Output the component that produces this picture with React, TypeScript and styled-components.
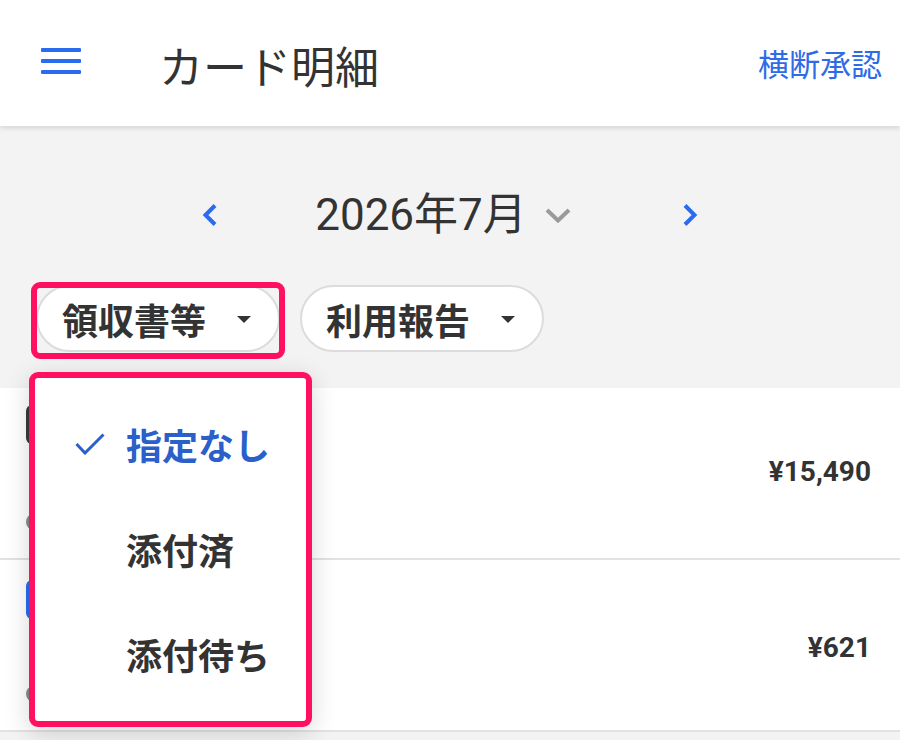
import React from "react";
import styled, { createGlobalStyle } from "styled-components";

const GlobalStyle = createGlobalStyle`
  html, body { margin: 0; padding: 0; background: #f4f3f4; }
  body { font-family: Roboto, "Noto Sans CJK JP", sans-serif; color: #333; }
  * { box-sizing: border-box; }
`;

const Page = styled.div`
  position: relative;
  width: 900px;
  height: 740px;
  overflow: hidden;
  background: #f4f3f4;
`;

const Header = styled.header`
  position: relative;
  z-index: 2;
  height: 126px;
  display: flex;
  align-items: center;
  padding: 0 18px 0 41px;
  background: #fff;
  box-shadow: 0 2px 5px rgba(0, 0, 0, 0.13);
`;

const MenuButton = styled.button`
  width: 40px;
  height: 26px;
  padding: 0;
  border: none;
  background: none;
  display: flex;
  margin-right: 78px;
  margin-top: -4px;
`;

const Title = styled.h1`
  margin: 4px 0 0;
  font-family: "Noto Sans CJK JP", sans-serif;
  font-size: 44px;
  font-weight: 400;
  line-height: 1;
  color: #333;
`;

const HeaderLink = styled.a`
  margin-left: auto;
  font-family: "Noto Sans CJK JP", sans-serif;
  font-size: 31px;
  color: #2f6be6;
  text-decoration: none;
  margin-top: -2px;
`;

const FilterArea = styled.section`
  padding: 59px 0 36px;
`;

const MonthNav = styled.div`
  display: flex;
  justify-content: center;
  align-items: center;
  height: 60px;
`;

const NavButton = styled.button`
  width: 48px;
  height: 48px;
  padding: 0;
  border: none;
  background: none;
  display: flex;
  align-items: center;
  justify-content: center;
`;

const MonthLabel = styled.div`
  display: flex;
  align-items: center;
  gap: 18px;
  margin: 0 95px 0 81px;
  font-size: 44px;
  font-weight: 400;
  color: #333;
  line-height: 1;
`;

const ChipRow = styled.div`
  display: flex;
  gap: 20px;
  padding-left: 36px;
  margin-top: 40px;
`;

const Chip = styled.button<{ $highlight?: boolean }>`
  position: relative;
  height: 67px;
  display: flex;
  align-items: center;
  gap: 31px;
  padding: 0 27px 0 24px;
  background: #fff;
  border: 2px solid #dcdcdc;
  border-radius: 34px;
  font-family: "Noto Sans CJK JP", sans-serif;
  font-size: 36px;
  font-weight: 700;
  color: #333;
  line-height: 1;
  &::after {
    content: "";
    display: ${(p) => (p.$highlight ? "block" : "none")};
    position: absolute;
    top: -5px;
    left: -7px;
    right: -7px;
    bottom: -9px;
    border: 6px solid #ff1060;
    border-radius: 9px;
  }
`;

const Caret = styled.span`
  width: 0;
  height: 0;
  border-left: 7px solid transparent;
  border-right: 7px solid transparent;
  border-top: 7px solid #333;
  margin-top: 2px;
`;

const List = styled.ul`
  margin: 0;
  padding: 0;
  list-style: none;
  background: #fff;
`;

const Row = styled.li`
  height: 172px;
  display: flex;
  align-items: center;
  justify-content: space-between;
  padding: 0 29px 0 26px;
  border-bottom: 2px solid #e2e2e2;
`;

const RowLead = styled.div<{ $top: number }>`
  align-self: stretch;
  display: flex;
  flex-direction: column;
  justify-content: space-between;
  padding: ${(p) => p.$top}px 0 28px;
`;

const Badge = styled.span<{ $color: string }>`
  width: 40px;
  height: 39px;
  border-radius: 6px;
  background: ${(p) => p.$color};
`;

const SubMark = styled.span`
  width: 30px;
  height: 16px;
  border-radius: 8px;
  background: #8a8a8a;
`;

const Amount = styled.span<{ $shift: number }>`
  font-family: Roboto, sans-serif;
  font-size: 28px;
  font-weight: 700;
  color: #333;
  margin-top: ${(p) => p.$shift}px;
`;

const MenuFrame = styled.div`
  position: absolute;
  z-index: 3;
  left: 29px;
  top: 372px;
  width: 283px;
  height: 355px;
  border: 6px solid #ff1060;
  border-radius: 9px;
  box-shadow: 0 6px 26px rgba(0, 0, 0, 0.16);
  background: #ff1060;
`;

const Menu = styled.ul`
  margin: 0;
  height: 100%;
  padding: 13px 0;
  list-style: none;
  background: #fff;
  border-radius: 3px;
`;

const MenuItem = styled.li<{ $selected?: boolean }>`
  height: 105px;
  display: flex;
  align-items: center;
  padding-left: 40px;
  gap: 21px;
  font-family: "Noto Sans CJK JP", sans-serif;
  font-size: 36px;
  font-weight: 700;
  line-height: 1;
  color: ${(p) => (p.$selected ? "#2b5fc9" : "#333")};
`;

const CheckSlot = styled.span`
  width: 30px;
  height: 22px;
  display: flex;
`;

const Hamburger = () => (
  <svg width="40" height="26" viewBox="0 0 40 26">
    <rect x="0" y="0" width="40" height="4" rx="1" fill="#2a6bf0" />
    <rect x="0" y="11" width="40" height="4" rx="1" fill="#2a6bf0" />
    <rect x="0" y="22" width="40" height="4" rx="1" fill="#2a6bf0" />
  </svg>
);

const ChevronLeft = () => (
  <svg width="16" height="24" viewBox="0 0 16 24">
    <polyline points="13,2.5 3.5,12 13,21.5" fill="none" stroke="#2a6bf0" strokeWidth="4" />
  </svg>
);

const ChevronRight = () => (
  <svg width="16" height="24" viewBox="0 0 16 24">
    <polyline points="3,2.5 12.5,12 3,21.5" fill="none" stroke="#2a6bf0" strokeWidth="4" />
  </svg>
);

const ChevronDown = () => (
  <svg width="26" height="15" viewBox="0 0 26 15">
    <polyline points="2,2 13,12.5 24,2" fill="none" stroke="#9a9a9a" strokeWidth="4" />
  </svg>
);

const Check = () => (
  <svg width="30" height="22" viewBox="0 0 30 22">
    <polyline points="1.5,11 10,20 28.5,1.5" fill="none" stroke="#2b5fc9" strokeWidth="3" />
  </svg>
);

const rows = [
  { amount: "¥15,490", badge: "#3a3a3a", top: 17, shift: -4 },
  { amount: "¥621", badge: "#2a6bf0", top: 20, shift: 4 },
];

const options = [
  { label: "指定なし", selected: true },
  { label: "添付済", selected: false },
  { label: "添付待ち", selected: false },
];

export default function App() {
  return (
    <Page>
      <GlobalStyle />
      <Header>
        <MenuButton aria-label="menu">
          <Hamburger />
        </MenuButton>
        <Title>カード明細</Title>
        <HeaderLink>横断承認</HeaderLink>
      </Header>

      <FilterArea>
        <MonthNav>
          <NavButton aria-label="prev">
            <ChevronLeft />
          </NavButton>
          <MonthLabel>
            <span>2026年7月</span>
            <ChevronDown />
          </MonthLabel>
          <NavButton aria-label="next">
            <ChevronRight />
          </NavButton>
        </MonthNav>
        <ChipRow>
          <Chip $highlight>
            <span>領収書等</span>
            <Caret />
          </Chip>
          <Chip>
            <span>利用報告</span>
            <Caret />
          </Chip>
        </ChipRow>
      </FilterArea>

      <List>
        {rows.map((r) => (
          <Row key={r.amount}>
            <RowLead $top={r.top}>
              <Badge $color={r.badge} />
              <SubMark />
            </RowLead>
            <Amount $shift={r.shift}>{r.amount}</Amount>
          </Row>
        ))}
      </List>

      <MenuFrame>
        <Menu>
          {options.map((o) => (
            <MenuItem key={o.label} $selected={o.selected}>
              <CheckSlot>{o.selected && <Check />}</CheckSlot>
              <span>{o.label}</span>
            </MenuItem>
          ))}
        </Menu>
      </MenuFrame>
    </Page>
  );
}
